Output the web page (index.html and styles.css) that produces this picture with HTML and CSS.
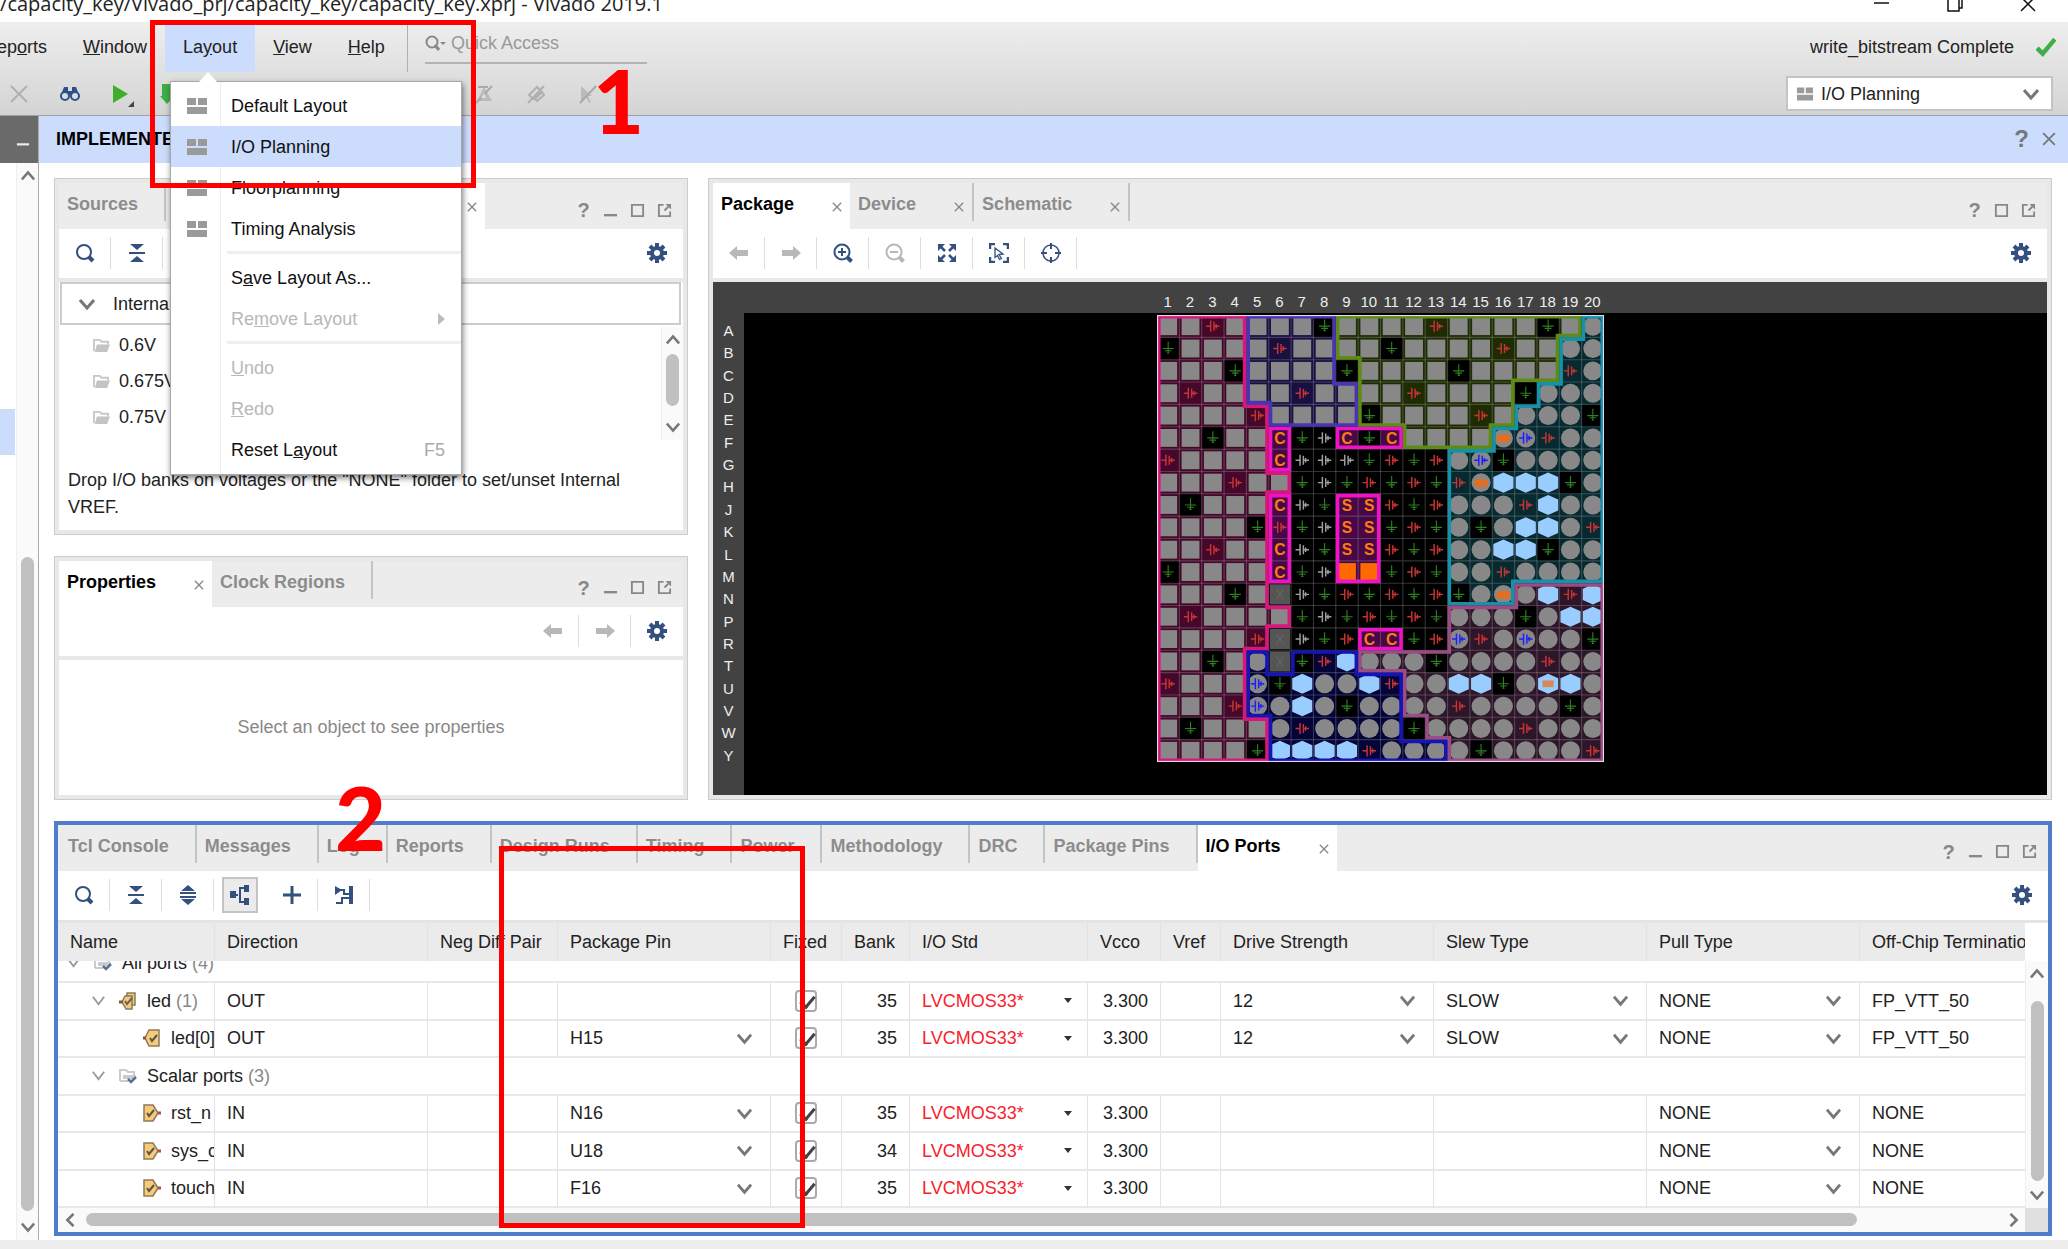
FILE: index.html
```html
<!DOCTYPE html>
<html lang="en">
<head>
    <meta charset="UTF-8">
    <meta name="viewport" content="width=device-width, initial-scale=1.0">
    <title>Vivado 2019.1</title>
    <link rel="stylesheet" href="styles.css">
</head>
<body>
    <!-- Icon sprite -->
    <svg class="sprite" aria-hidden="true">
        <symbol id="i-search" viewBox="0 0 20 20"><circle cx="9" cy="9" r="7" fill="none" stroke="currentColor" stroke-width="2"/><path d="M14 14l4 4" stroke="currentColor" stroke-width="4"/></symbol>
        <symbol id="i-collapse" viewBox="0 0 20 20"><path d="M3 1h14l-7 6zM3 19h14l-7-6zM2 9h16v2H2z" fill="currentColor"/></symbol>
        <symbol id="i-expand" viewBox="0 0 20 20"><path d="M3 6h14L10 0zM3 14h14L10 20zM2 7h16v2H2zM2 11h16v2H2z" fill="currentColor"/></symbol>
        <symbol id="i-tree" viewBox="0 0 20 20"><path d="M0 6h6v7H0zM14 0h5v7h-5zM14 13h5v7h-5z" fill="currentColor"/><path d="M6 10h2M15 3h-5v14h5" fill="none" stroke="currentColor" stroke-width="2"/></symbol>
        <symbol id="i-plus" viewBox="0 0 20 20"><path d="M10 1v18M1 10h18" stroke="currentColor" stroke-width="3"/></symbol>
        <symbol id="i-port" viewBox="0 0 20 20"><path d="M1 1l7 4-7 5zM15 1h4v18h-4z" fill="currentColor"/><path d="M6 5h4v4h5M2 18h6v-5h7" fill="none" stroke="currentColor" stroke-width="2"/></symbol>
        <symbol id="i-gear" viewBox="0 0 20 20"><path d="M10 0v20M0 10h20M3 3l14 14M17 3L3 17" stroke="currentColor" stroke-width="4"/><circle cx="10" cy="10" r="7" fill="currentColor"/><circle cx="10" cy="10" r="3" fill="#fff"/></symbol>
        <symbol id="i-left" viewBox="0 0 20 20"><path d="M0 10l8-7v4h11v6H8v4z" fill="currentColor"/></symbol>
        <symbol id="i-right" viewBox="0 0 20 20"><path d="M20 10l-8-7v4H1v6h11v4z" fill="currentColor"/></symbol>
        <symbol id="i-zoom-in" viewBox="0 0 20 20"><circle cx="9" cy="9" r="7.500" fill="none" stroke="currentColor" stroke-width="2"/><path d="M9 5v8M5 9h8" stroke="currentColor" stroke-width="2"/><path d="M14.500 14.500l4 4" stroke="currentColor" stroke-width="4"/></symbol>
        <symbol id="i-zoom-out" viewBox="0 0 20 20"><circle cx="9" cy="9" r="7.500" fill="none" stroke="currentColor" stroke-width="2"/><path d="M5 9h8" stroke="currentColor" stroke-width="2"/><path d="M14.500 14.500l4 4" stroke="currentColor" stroke-width="4"/></symbol>
        <symbol id="i-fit" viewBox="0 0 20 20"><path d="M1 1h7L1 8zM19 1v7l-7-7zM1 19v-7l7 7zM19 19h-7l7-7z" fill="currentColor"/><path d="M3 3l5 5M17 3l-5 5M3 17l5-5M17 17l-5-5" stroke="currentColor" stroke-width="2.500"/></symbol>
        <symbol id="i-select" viewBox="0 0 20 20"><path d="M6 1H1v5M14 1h5v5M1 14v5h5M19 14v5h-5" fill="none" stroke="currentColor" stroke-width="2.500"/><path d="M6 5l8 6-4 .5 2.500 4-2 1-2-4-2.500 2z" fill="none" stroke="currentColor" stroke-width="1.300"/></symbol>
        <symbol id="i-target" viewBox="0 0 20 20"><circle cx="10" cy="10" r="8" fill="none" stroke="currentColor" stroke-width="1.500"/><path d="M10 0v6M10 14v6M0 10h6M14 10h6" stroke="currentColor" stroke-width="2"/></symbol>
        <symbol id="i-min" viewBox="0 0 16 16"><path d="M1 13h14" stroke="currentColor" stroke-width="2.500"/></symbol>
        <symbol id="i-max" viewBox="0 0 16 16"><path d="M2 2h12v12H2z" fill="none" stroke="currentColor" stroke-width="2"/></symbol>
        <symbol id="i-float" viewBox="0 0 16 16"><path d="M7 2H2v12h12V9M8 8l4-4" fill="none" stroke="currentColor" stroke-width="2"/><path d="M9 1h6v6z" fill="currentColor"/></symbol>
        <symbol id="i-close" viewBox="0 0 12 12"><path d="M1 1l10 10M11 1L1 11" stroke="currentColor" stroke-width="1.600"/></symbol>
        <symbol id="i-down" viewBox="0 0 16 16"><path d="M1 4l7 8 7-8" fill="none" stroke="currentColor" stroke-width="3"/></symbol>
        <symbol id="i-twist" viewBox="0 0 16 16"><path d="M2 4l6 8 6-8" fill="none" stroke="currentColor" stroke-width="2"/></symbol>
        <symbol id="i-up" viewBox="0 0 16 16"><path d="M1 12l7-8 7 8" fill="none" stroke="currentColor" stroke-width="3"/></symbol>
        <symbol id="i-back" viewBox="0 0 16 16"><path d="M12 1L5 8l7 7" fill="none" stroke="currentColor" stroke-width="3"/></symbol>
        <symbol id="i-next" viewBox="0 0 16 16"><path d="M4 1l7 7-7 7" fill="none" stroke="currentColor" stroke-width="3"/></symbol>
        <symbol id="i-layout" viewBox="0 0 20 18"><path d="M0 1h9v7H0zM11 1h9v7h-9zM0 10h20v7H0z" fill="#9a9a9a"/></symbol>
        <symbol id="i-folder" viewBox="0 0 18 16"><path d="M1 14V2h6l2 2h7v3" fill="none" stroke="#c8c8c8" stroke-width="2"/><path d="M4 7h14l-3 8H2z" fill="#c4c4c4"/></symbol>
        <symbol id="i-folder-ok" viewBox="0 0 18 16"><path d="M1 13V2h6l2 2h6v3M1 13h8" fill="none" stroke="#c8ccd0" stroke-width="2"/><path d="M4 7h13l-2 4H4z" fill="#c8ccd0"/><path d="M9 11l3 3 5-5" fill="none" stroke="#5a7090" stroke-width="2.500"/></symbol>
        <symbol id="i-out" viewBox="0 0 18 18"><path d="M6 1h10v16H6L2 9z" fill="#f8ca74" stroke="#8a7a60" stroke-width="1.500"/><path d="M0 9h3" stroke="#8a5040" stroke-width="3"/><path d="M7 9l2 3 5-6" fill="none" stroke="#555" stroke-width="2"/></symbol>
        <symbol id="i-bus" viewBox="0 0 18 18"><path d="M8 1h8v12H8z" fill="#f8ca74" stroke="#8a7a60" stroke-width="1.500"/><path d="M6 4h7v13H7l-4-7z" fill="#f8ca74" stroke="#8a7a60" stroke-width="1.500"/><path d="M0 10h4" stroke="#8a5040" stroke-width="3"/><path d="M6 9l2 3 5-6" fill="none" stroke="#666" stroke-width="2"/></symbol>
        <symbol id="i-in" viewBox="0 0 18 18"><path d="M1 1h9l5 8-5 8H1z" fill="#f8ca74" stroke="#8a7a60" stroke-width="1.500"/><path d="M15 9h3" stroke="#b05040" stroke-width="3"/><path d="M4 9l2 3 5-6" fill="none" stroke="#555" stroke-width="2"/></symbol>
    </svg>

    <!-- Title bar -->
    <header class="titlebar">
        <span class="title-text">j/capacity_key/Vivado_prj/capacity_key/capacity_key.xprj - Vivado 2019.1</span>
        <div class="window-buttons">
            <button aria-label="Minimize"><svg viewBox="0 0 16 16"><path d="M0 7h15" stroke="#111" stroke-width="1.500"/></svg></button>
            <button aria-label="Restore"><svg viewBox="0 0 16 16"><path d="M1 4v11h11V4M12 12h3V2" fill="none" stroke="#111" stroke-width="1.500"/></svg></button>
            <button aria-label="Close"><svg viewBox="0 0 16 16"><path d="M1 1l14 14M15 1L1 15" stroke="#111" stroke-width="1.500"/></svg></button>
        </div>
    </header>

    <!-- Menu and main toolbar -->
    <div class="topbar">
        <div class="menubar">
            <nav>
                <ul class="menus">
                    <li class="cut"><a href="#">Rep<u>o</u>rts</a></li>
                    <li><a href="#"><u>W</u>indow</a></li>
                    <li class="open">
                        <a href="#">La<u>y</u>out</a>
                        <div class="popup">
                            <button><svg><use href="#i-layout"/></svg>Default Layout</button>
                            <button class="hot"><svg><use href="#i-layout"/></svg>I/O Planning</button>
                            <button><svg><use href="#i-layout"/></svg>Floorplanning</button>
                            <button><svg><use href="#i-layout"/></svg>Timing Analysis</button>
                            <hr>
                            <button>S<u>a</u>ve Layout As...</button>
                            <button disabled>Re<u>m</u>ove Layout <span class="submenu"></span></button>
                            <hr>
                            <button disabled><u>U</u>ndo</button>
                            <button disabled><u>R</u>edo</button>
                            <button>Reset L<u>a</u>yout <kbd>F5</kbd></button>
                        </div>
                    </li>
                    <li><a href="#"><u>V</u>iew</a></li>
                    <li><a href="#"><u>H</u>elp</a></li>
                </ul>
            </nav>
            <label class="quick">
                <svg viewBox="0 0 22 18"><circle cx="7" cy="8" r="5.500" fill="none" stroke="#888" stroke-width="2"/><path d="M10 11l4 5" stroke="#888" stroke-width="3"/><path d="M15 8h6l-3 3z" fill="#888"/></svg>
                <input type="text" placeholder="Quick Access" aria-label="Quick Access">
            </label>
            <div class="run-status">
                write_bitstream Complete
                <svg viewBox="0 0 18 18"><path d="M1 10l5 5L17 2" fill="none" stroke="#3fae49" stroke-width="4"/></svg>
            </div>
        </div>
        <div class="main-tools">
            <button aria-label="Delete"><svg viewBox="0 0 20 20"><path d="M2 2l16 16M18 2L2 18" stroke="#b0b0b0" stroke-width="2"/></svg></button>
            <button aria-label="Find"><svg viewBox="0 0 20 20"><path d="M4 3h4v4h4V3h4l3 8H1z" fill="#2f4f86"/><circle cx="5" cy="12" r="4" fill="#d8dce4" stroke="#2f4f86" stroke-width="2"/><circle cx="15" cy="12" r="4" fill="#d8dce4" stroke="#2f4f86" stroke-width="2"/></svg></button>
            <button class="run" aria-label="Run"><svg viewBox="0 0 24 26"><path d="M2 4l15 9-15 9z" fill="#3fae2a"/><path d="M23 20v6h-6z" fill="#444"/></svg></button>
            <button aria-label="Generate bitstream"><svg viewBox="0 0 20 20"><path d="M2 0h9v11h4l-8 9-7-8h2z" fill="#3fae49"/></svg></button>
            <div class="more-tools">
                <button disabled aria-label="Unmark"><svg viewBox="0 0 20 20"><path d="M10 3l8 14H3zM2 5h8" fill="#bbb"/><path d="M4 3h10M2 19L18 2" stroke="#aaa" stroke-width="2"/><path d="M7 14l5 0-2-5z" fill="#ddd"/></svg></button>
                <button disabled aria-label="Unhighlight"><svg viewBox="0 0 20 20"><path d="M3 11l8-8 4 4-8 8zM9 15l7-7 2 3-7 6zM2 19L18 2" fill="none" stroke="#b0b0b0" stroke-width="2"/></svg></button>
                <button disabled aria-label="Unselect"><svg viewBox="0 0 20 20"><path d="M3 2l11 10h-4l3 6-2 1-3-6-5 4z" fill="#bbb"/><path d="M2 19L18 2" stroke="#aaa" stroke-width="2"/></svg></button>
            </div>
            <label class="layout-pick">
                <svg class="pick-icon"><use href="#i-layout"/></svg>
                <select aria-label="Layout"><option>I/O Planning</option></select>
                <svg class="pick-arrow"><use href="#i-down"/></svg>
            </label>
        </div>
    </div>

    <div class="workspace">
        <!-- Left edge of the Flow Navigator -->
        <aside class="navigator">
            <div class="nav-head"><button aria-label="Minimize navigator"><svg><use href="#i-min"/></svg></button></div>
            <div class="nav-body">
                <div class="nav-item"></div>
                <div class="vscroll">
                    <svg><use href="#i-up"/></svg>
                    <div class="thumb nav-thumb"></div>
                    <svg><use href="#i-down"/></svg>
                </div>
            </div>
        </aside>

        <div class="design">
            <div class="design-head">
                <h1>IMPLEMENTED DESIGN</h1>
                <button aria-label="Help">?</button>
                <button aria-label="Close design"><svg><use href="#i-close"/></svg></button>
            </div>

            <main class="panels">
                <section class="panel sources">
                    <div class="tabs">
                        <button class="tab">Sources</button>
                        <button class="tab">Netlist</button>
                        <button class="tab active wide">Device Constraints <svg><use href="#i-close"/></svg></button>
                        <div class="panel-buttons">
                            <button aria-label="Help">?</button>
                            <button aria-label="Minimize"><svg><use href="#i-min"/></svg></button>
                            <button aria-label="Maximize"><svg><use href="#i-max"/></svg></button>
                            <button aria-label="Float"><svg><use href="#i-float"/></svg></button>
                        </div>
                    </div>
                    <div class="tools">
                        <button aria-label="Search"><svg><use href="#i-search"/></svg></button>
                        <button aria-label="Collapse all"><svg><use href="#i-collapse"/></svg></button>
                        <button class="settings" aria-label="Settings"><svg><use href="#i-gear"/></svg></button>
                    </div>
                    <div class="panel-body">
                        <button class="vref-head"><svg><use href="#i-down"/></svg>Internal VREF</button>
                        <div class="vref">
                            <ul>
                                <li><svg><use href="#i-folder"/></svg>0.6V</li>
                                <li><svg><use href="#i-folder"/></svg>0.675V</li>
                                <li><svg><use href="#i-folder"/></svg>0.75V</li>
                            </ul>
                            <div class="vscroll">
                                <svg><use href="#i-up"/></svg>
                                <div class="thumb vref-thumb"></div>
                                <svg><use href="#i-down"/></svg>
                            </div>
                        </div>
                        <p class="hint">Drop I/O banks on voltages or the "NONE" folder to set/unset Internal VREF.</p>
                    </div>
                </section>

                <section class="panel properties">
                    <div class="tabs">
                        <button class="tab active">Properties <svg><use href="#i-close"/></svg></button>
                        <button class="tab">Clock Regions</button>
                        <div class="panel-buttons">
                            <button aria-label="Help">?</button>
                            <button aria-label="Minimize"><svg><use href="#i-min"/></svg></button>
                            <button aria-label="Maximize"><svg><use href="#i-max"/></svg></button>
                            <button aria-label="Float"><svg><use href="#i-float"/></svg></button>
                        </div>
                    </div>
                    <div class="tools end">
                        <button disabled aria-label="Back"><svg><use href="#i-left"/></svg></button>
                        <button disabled aria-label="Forward"><svg><use href="#i-right"/></svg></button>
                        <button class="settings" aria-label="Settings"><svg><use href="#i-gear"/></svg></button>
                    </div>
                    <div class="panel-body empty">Select an object to see properties</div>
                </section>

                <section class="panel package">
                    <div class="tabs">
                        <button class="tab active">Package <svg><use href="#i-close"/></svg></button>
                        <button class="tab">Device <svg><use href="#i-close"/></svg></button>
                        <button class="tab">Schematic <svg><use href="#i-close"/></svg></button>
                        <div class="panel-buttons">
                            <button aria-label="Help">?</button>
                            <button aria-label="Maximize"><svg><use href="#i-max"/></svg></button>
                            <button aria-label="Float"><svg><use href="#i-float"/></svg></button>
                        </div>
                    </div>
                    <div class="tools">
                        <button disabled aria-label="Back"><svg><use href="#i-left"/></svg></button>
                        <button disabled aria-label="Forward"><svg><use href="#i-right"/></svg></button>
                        <button aria-label="Zoom in"><svg><use href="#i-zoom-in"/></svg></button>
                        <button disabled aria-label="Zoom out"><svg><use href="#i-zoom-out"/></svg></button>
                        <button aria-label="Zoom fit"><svg><use href="#i-fit"/></svg></button>
                        <button aria-label="Select area"><svg><use href="#i-select"/></svg></button>
                        <button aria-label="Autofit selection"><svg><use href="#i-target"/></svg></button>
                        <button class="settings" aria-label="Settings"><svg><use href="#i-gear"/></svg></button>
                    </div>
                    <div class="canvas">
                        <div class="ruler-top"><div class="cols" id="cols"></div></div>
                        <div class="ruler-left"><div class="rows" id="rows"></div></div>
                        <div class="chip-area"><svg id="chip" class="chip" viewBox="0 0 400 400"></svg></div>
                    </div>
                </section>

                <section class="panel ports focused">
                    <div class="tabs">
                        <button class="tab">Tcl Console</button>
                        <button class="tab">Messages</button>
                        <button class="tab">Log</button>
                        <button class="tab">Reports</button>
                        <button class="tab">Design Runs</button>
                        <button class="tab">Timing</button>
                        <button class="tab">Power</button>
                        <button class="tab">Methodology</button>
                        <button class="tab">DRC</button>
                        <button class="tab">Package Pins</button>
                        <button class="tab active">I/O Ports <svg><use href="#i-close"/></svg></button>
                        <div class="panel-buttons">
                            <button aria-label="Help">?</button>
                            <button aria-label="Minimize"><svg><use href="#i-min"/></svg></button>
                            <button aria-label="Maximize"><svg><use href="#i-max"/></svg></button>
                            <button aria-label="Float"><svg><use href="#i-float"/></svg></button>
                        </div>
                    </div>
                    <div class="tools">
                        <button aria-label="Search"><svg><use href="#i-search"/></svg></button>
                        <button aria-label="Collapse all"><svg><use href="#i-collapse"/></svg></button>
                        <button aria-label="Expand all"><svg><use href="#i-expand"/></svg></button>
                        <button class="pressed" aria-label="Group by interface"><svg><use href="#i-tree"/></svg></button>
                        <button aria-label="Create port"><svg><use href="#i-plus"/></svg></button>
                        <button aria-label="Place ports"><svg><use href="#i-port"/></svg></button>
                        <button class="settings" aria-label="Settings"><svg><use href="#i-gear"/></svg></button>
                    </div>
                    <div class="table-area">
                        <table>
                            <colgroup>
                                <col class="w-name"><col class="w-list"><col class="w-pair"><col class="w-list">
                                <col class="w-fixed"><col class="w-bank"><col class="w-std"><col class="w-vcco">
                                <col class="w-vref"><col class="w-list"><col class="w-list"><col class="w-list"><col>
                            </colgroup>
                            <thead>
                                <tr>
                                    <th>Name</th><th>Direction</th><th>Neg Diff Pair</th><th>Package Pin</th>
                                    <th>Fixed</th><th>Bank</th><th>I/O Std</th><th>Vcco</th><th>Vref</th>
                                    <th>Drive Strength</th><th>Slew Type</th><th>Pull Type</th><th>Off-Chip Termination</th>
                                </tr>
                            </thead>
                            <tbody id="ports"></tbody>
                        </table>
                        <div class="vscroll table-scroll">
                            <svg><use href="#i-up"/></svg>
                            <div class="thumb table-thumb"></div>
                            <svg><use href="#i-down"/></svg>
                        </div>
                    </div>
                    <div class="hscroll">
                        <svg><use href="#i-back"/></svg>
                        <div class="htrack"><div class="hthumb"></div></div>
                        <svg><use href="#i-next"/></svg>
                        <div class="corner"></div>
                    </div>
                </section>
            </main>
        </div>
    </div>
    <footer class="statusbar"></footer>

    <!-- Step marks -->
    <div class="mark mark-one"></div>
    <div class="mark mark-two"></div>
    <div class="step step-one">1</div>
    <div class="step step-two">2</div>

    <script>
        // I/O ports table
        const ports = [
            { group: 'All ports', count: 4, level: 0 },
            { name: 'led', count: 1, level: 1, icon: 'bus', dir: 'OUT', bank: 35, drive: '12', slew: 'SLOW', term: 'FP_VTT_50' },
            { name: 'led[0]', level: 2, icon: 'out', dir: 'OUT', pin: 'H15', bank: 35, drive: '12', slew: 'SLOW', term: 'FP_VTT_50' },
            { group: 'Scalar ports', count: 3, level: 1 },
            { name: 'rst_n', level: 2, icon: 'in', dir: 'IN', pin: 'N16', bank: 35, term: 'NONE' },
            { name: 'sys_clk', level: 2, icon: 'in', dir: 'IN', pin: 'U18', bank: 34, term: 'NONE' },
            { name: 'touch_key', level: 2, icon: 'in', dir: 'IN', pin: 'F16', bank: 35, term: 'NONE' }
        ];

        function icon(name) {
            return `<svg><use href="#i-${name}"/></svg>`;
        }

        function pick(value, label) {
            if (!value) return '';
            return `<div class="pick"><select aria-label="${label}"><option>${value}</option></select>${icon('down')}</div>`;
        }

        function nameCell(port) {
            const arrow = port.count ? icon('twist') : '';
            const count = port.count ? ` <span class="count">(${port.count})</span>` : '';
            return `<div class="node level-${port.level}"><span class="twist">${arrow}</span>${icon(port.icon || 'folder-ok')}<span>${port.name || port.group}${count}</span></div>`;
        }

        document.getElementById('ports').innerHTML = ports.map(port => {
            if (port.group) {
                return `<tr class="group"><td colspan="13">${nameCell(port)}</td></tr>`;
            }
            return `<tr>
                <td>${nameCell(port)}</td>
                <td>${port.dir}</td>
                <td></td>
                <td>${pick(port.pin, 'Package pin')}</td>
                <td class="center"><input type="checkbox" checked aria-label="Fixed ${port.name}"></td>
                <td class="right">${port.bank}</td>
                <td><div class="pick std"><select aria-label="I/O standard"><option>LVCMOS33*</option></select><i></i></div></td>
                <td class="right">3.300</td>
                <td></td>
                <td>${pick(port.drive, 'Drive strength')}</td>
                <td>${pick(port.slew, 'Slew type')}</td>
                <td>${pick('NONE', 'Pull type')}</td>
                <td>${port.term}</td>
            </tr>`;
        }).join('');

        // Package pins, one letter for each ball
        const balls = {
            A: 'sspssssgsssspssssgsc',
            B: 'gsssspssssgsssspsscc',
            C: 'sssgssssgssssgsssspc',
            D: 'spsssspsssspssssgccc',
            E: 'sssspssssgsssspscccg',
            F: 'ssgssCgwCgCssssObpcc',
            G: 'pssssCwwwgpgpcbgcccc',
            H: 'ssspssgwgpgpgpOhhhgc',
            J: 'sgsssCwgSSpgpcccphcc',
            K: 'ssssgpgwSSgpgcgchhcp',
            L: 'sspssCwgSSpgpcchhgcc',
            M: 'gssssCgwoogpgccpcccc',
            N: 'sssgsxwgpgpgpgcOchph',
            P: 'spssssgwgpgpgcccgchh',
            R: 'sssspxwgpCCgpbpcbccg',
            T: 'ssgscxgphcccgccccpcc',
            U: 'psssbghcchpcchhgcHhc',
            V: 'ssspbchcgccccpccccgc',
            W: 'sgssscpccccgccccpccc',
            Y: 'ssssghhhhpccccgccccp'
        };

        // Bank outlines in ball units
        const banks = [
            ['#d6187c', '#46082a', 'M0 0H4V4H5V7H6V8H5V13H6V14H5V15H4V18H5V20H0Z'],
            ['#4a34b4', '#181040', 'M4 0H8V3H9V5H5V4H4Z'],
            ['#5c8c16', '#1e2c04', 'M8 0H19V1H18V3H16V5H15V6H11V5H9V2H8Z'],
            ['#1592aa', '#062a30', 'M19 0H20V12H16V13H13V6H15V5H16V4H17V3H18V1H19Z'],
            ['#9a4c84', '#2e162a', 'M20 12H16V13H13V15H9V16H11V18H12V19H13V20H20Z'],
            ['#1414b8', '#040438', 'M4 15H5V16H6V15H9V16H11V19H13V20H5V18H4Z'],
            ['#f012c4', '#480848', 'M5 5H6V7H5ZM8 5H11V6H8ZM5 8H6V12H5ZM8 8H10V12H8ZM9 14H11V15H9Z']
        ];

        const ground = '<rect width="20" height="20" fill="#000"/><path d="M10 4v10M5 10h10M7 12h6M9 14h2" stroke="#2f8020" fill="none"/>';
        const power = color => `<path d="M4 10h4M11 10h5M8 5v10M11 6v8M13 8v4" stroke="${color}" stroke-width="1.300" fill="none"/>`;
        const circle = '<circle cx="10" cy="10" r="8.500" fill="#888"/>';
        const hexagon = '<path d="M10 1l9 4v10l-9 4-9-4V5z" fill="#99ccff"/>';
        const letter = text => `<text x="10" y="15">${text}</text>`;
        const shapes = {
            s: '<rect x="2" y="2" width="16" height="16" fill="#888"/>',
            x: '<rect x="1" y="1" width="18" height="18" fill="#555"/><path d="M7 6l6 8M13 6l-6 8" stroke="#666"/>',
            c: circle,
            h: hexagon,
            g: ground,
            p: power('#c83434'),
            w: power('#a0a0a0'),
            b: circle + power('#1c1cff'),
            C: letter('C'),
            S: letter('S'),
            o: '<rect x="2" y="2" width="16" height="16" fill="#ff6a00"/>',
            O: circle + '<rect x="4" y="7" width="12" height="7" rx="2" fill="#e07024"/>',
            H: hexagon + '<rect x="5" y="7" width="10" height="6" fill="#d88858"/>'
        };

        let drawing = '<rect width="400" height="400" fill="#000"/><defs>';
        banks.forEach((bank, i) => {
            drawing += `<clipPath id="bank-${i}"><path d="${bank[2]}"/></clipPath>`;
        });
        drawing += '</defs><g transform="scale(20)">';
        banks.forEach(bank => {
            drawing += `<path d="${bank[2]}" fill="${bank[1]}"/>`;
        });
        drawing += '</g>';
        Object.values(balls).forEach((row, y) => {
            row.split('').forEach((ball, x) => {
                drawing += `<g transform="translate(${x * 20} ${y * 20})">${shapes[ball]}</g>`;
            });
        });
        for (let i = 1; i < 20; i++) {
            drawing += `<path d="M${i * 20} 0V400M0 ${i * 20}H400" stroke="#aaa" stroke-opacity=".3"/>`;
        }
        drawing += '<g transform="scale(20)">';
        banks.forEach((bank, i) => {
            drawing += `<path d="${bank[2]}" fill="none" stroke="${bank[0]}" stroke-width=".32" clip-path="url(#bank-${i})"/>`;
        });
        drawing += '</g><rect width="400" height="400" fill="none" stroke="#e8d8e8" stroke-width="2"/>';
        document.getElementById('chip').innerHTML = drawing;

        document.getElementById('rows').innerHTML = Object.keys(balls).map(name => `<span>${name}</span>`).join('');
        document.getElementById('cols').innerHTML = Object.keys(balls).map((name, i) => `<span>${i + 1}</span>`).join('');
    </script>
</body>
</html>
```
FILE: styles.css
```css
/* General */
* {
    box-sizing: border-box;
}
body {
    font-family: "Liberation Sans", Arial, sans-serif;
    font-size: 18px;
    line-height: 24px;
    color: #222;
    background-color: #fff;
    margin: 0;
    display: flex;
    flex-direction: column;
    height: 100vh;
    overflow: hidden;
    position: relative;
}
button, input, select {
    font: inherit;
    color: inherit;
    background: none;
    border: none;
    margin: 0;
    padding: 0;
}
select {
    appearance: none;
}
ul {
    list-style: none;
    margin: 0;
    padding: 0;
}
svg {
    display: block;
    flex: none;
    width: 20px;
    height: 20px;
}
.sprite {
    position: absolute;
    width: 0;
    height: 0;
}

/* Title bar */
.titlebar {
    flex: none;
    height: 22px;
    padding: 0 32px 6px 0;
    overflow: hidden;
    display: flex;
    align-items: flex-end;
    justify-content: space-between;
}
.title-text {
    font-family: "Open Sans", "Noto Sans", sans-serif;
    font-size: 20px;
    white-space: nowrap;
    margin-left: -5px;
}
.window-buttons {
    display: flex;
    gap: 57px;
    padding-bottom: 4px;
}
.window-buttons svg {
    width: 16px;
    height: 16px;
}

/* Menu bar */
.topbar {
    flex: none;
    background: linear-gradient(#eee, #d4d4d4);
    border-bottom: 1px solid #a0a0a0;
}
.menubar {
    display: flex;
    height: 50px;
    padding: 2px 12px 0 0;
}
.menus {
    display: flex;
    height: 48px;
    border-right: 1px solid #b0b0b0;
    padding-right: 4px;
}
.menus li {
    position: relative;
}
.menus a {
    display: block;
    color: #222;
    text-decoration: none;
    padding: 0 18px;
    line-height: 46px;
}
.menus .cut {
    margin-left: -34px;
}
.open > a {
    background-color: #cbdcfd;
    height: 48px;
}
.quick {
    display: flex;
    align-items: center;
    width: 222px;
    height: 40px;
    margin-left: 17px;
    border-bottom: 2px solid #b4b4b4;
}
.quick svg {
    width: 22px;
    height: 18px;
}
.quick input {
    width: 180px;
    padding: 0 4px;
}
.quick input::placeholder {
    color: #999;
    opacity: 1;
}
.run-status {
    margin-left: auto;
    display: flex;
    align-items: center;
    gap: 22px;
    height: 46px;
}

/* Layout menu */
.popup {
    position: absolute;
    z-index: 5;
    left: 5px;
    top: 57px;
    width: 292px;
    padding: 3px 0 4px;
    background: linear-gradient(#eee, #eee) 49px 0 / 1px 100% no-repeat #fff;
    border: 1px solid #a8a8a8;
    box-shadow: 1px 3px 6px rgba(0, 0, 0, 0.5);
}
.popup::before {
    content: "";
    position: absolute;
    left: 28px;
    top: -10px;
    border: 9px solid transparent;
    border-top: 0;
    border-bottom: 10px solid #fff;
}
.popup button {
    position: relative;
    display: flex;
    align-items: center;
    width: 100%;
    height: 41px;
    padding: 0 16px 0 60px;
    white-space: pre;
    color: #111;
}
.popup button svg {
    position: absolute;
    left: 16px;
    height: 18px;
}
.popup .hot {
    background-color: #cbdcfd;
}
.popup button:disabled {
    color: #b8b8b8;
}
.popup hr {
    height: 3px;
    margin: 2px 0 3px 56px;
    border: none;
    background-color: #eee;
}
.popup kbd {
    font: inherit;
    color: #aaa;
    margin-left: auto;
}
.submenu {
    margin-left: auto;
    border: 6px solid transparent;
    border-left: 7px solid #bbb;
    border-right: 0;
}

/* Main toolbar */
.main-tools {
    display: flex;
    align-items: center;
    height: 43px;
    padding: 0 15px 0 9px;
    gap: 31px;
}
.main-tools .run {
    margin-right: -6px;
}
.run svg {
    width: 24px;
    height: 26px;
}
.more-tools {
    display: flex;
    gap: 32px;
    margin-left: 263px;
}
.layout-pick {
    margin-left: auto;
    display: flex;
    align-items: center;
    width: 267px;
    height: 35px;
    padding: 0 12px 0 9px;
    gap: 8px;
    background-color: #fff;
    border: 2px solid #c4c4c4;
}
.layout-pick select {
    flex: 1;
}
.pick-icon, .pick-arrow {
    width: 16px;
    height: 16px;
    color: #777;
}

/* Workspace */
.workspace {
    flex: 1;
    display: flex;
    min-height: 0;
}
.navigator {
    width: 38px;
    display: flex;
    flex-direction: column;
}
.nav-head {
    display: flex;
    align-items: center;
    justify-content: flex-end;
    height: 47px;
    padding-right: 8px;
    background-color: #6a6a6a;
    color: #eee;
}
.nav-head svg {
    width: 14px;
    height: 14px;
}
.nav-body {
    flex: 1;
    display: flex;
    justify-content: space-between;
}
.nav-item {
    width: 15px;
    height: 46px;
    margin-top: 246px;
    background-color: #cbdcfd;
}
.design {
    flex: 1;
    min-width: 0;
    display: flex;
    flex-direction: column;
    border-left: 1px solid #aaa;
}
.design-head {
    flex: none;
    height: 47px;
    padding: 0 12px 2px 17px;
    display: flex;
    align-items: center;
    background-color: #cbdcfd;
}
.design-head h1 {
    flex: 1;
    margin: 0;
    font-size: 18px;
    color: #000;
}
.design-head button {
    color: #777;
    font-size: 24px;
    font-weight: bold;
    margin-left: 13px;
}
.design-head svg {
    width: 14px;
    height: 14px;
}

/* Scrollbars */
.vscroll {
    width: 22px;
    padding: 6px 0;
    display: flex;
    flex-direction: column;
    align-items: center;
    color: #777;
    background-color: #fafafa;
    border-left: 1px solid #eee;
}
.vscroll svg, .hscroll svg {
    width: 14px;
    height: 14px;
}
.vscroll svg:last-child {
    margin-top: auto;
}
.thumb {
    width: 13px;
    border-radius: 7px;
    background-color: #c0c0c0;
}
.nav-thumb {
    flex: 1;
    margin: 374px 0 9px;
}
.vref-thumb {
    height: 52px;
    margin-top: 7px;
}
.table-thumb {
    height: 180px;
    margin-top: 20px;
}

/* Panels */
.panels {
    flex: 1;
    min-height: 0;
    display: grid;
    grid-template-columns: minmax(0, 634fr) minmax(0, 1344fr);
    grid-template-rows: minmax(0, 356fr) minmax(0, 244fr) auto;
    gap: 21px 20px;
    padding: 15px 16px 4px 15px;
}
.panel {
    display: flex;
    flex-direction: column;
    min-width: 0;
    padding: 4px;
    background-color: #e8e8e8;
    border: 1px solid #ccc;
}
.package {
    grid-column: 2;
    grid-row: 1 / 3;
}
.ports {
    grid-column: 1 / 3;
}
.focused {
    padding: 0;
    border: 4px solid #4f7dcb;
}
.tabs {
    flex: none;
    height: 46px;
    display: flex;
    align-items: flex-start;
    background-color: #ececec;
}
.ports .tabs {
    padding-left: 2px;
}
.tab {
    display: flex;
    align-items: center;
    justify-content: space-between;
    height: 38px;
    padding: 4px 26px 0 8px;
    font-weight: bold;
    color: #8c8c8c;
    border-right: 2px solid #c4c4c4;
    white-space: pre;
}
.tab.active {
    height: 46px;
    padding-top: 0;
    padding-bottom: 4px;
    background-color: #fff;
    border-right: none;
    color: #000;
}
.tab svg {
    width: 10px;
    height: 10px;
    margin: 6px -18px 0 33px;
    color: #888;
}
.wide {
    flex: 0 1 228px;
}
.panel-buttons {
    margin-left: auto;
    display: flex;
    align-items: center;
    gap: 12px;
    height: 46px;
    padding: 8px 11px 0 0;
    color: #888;
}
.panel-buttons button {
    width: 15px;
    font-size: 20px;
    font-weight: bold;
}
.panel-buttons svg {
    width: 15px;
    height: 15px;
}
.tools {
    flex: none;
    display: flex;
    height: 49px;
    background-color: #fff;
    color: #34507f;
}
.tools button {
    display: flex;
    align-items: center;
    justify-content: center;
    width: 52px;
    height: 32px;
    margin: 8px 0 9px;
    border-right: 1px solid #ddd;
}
.tools button:disabled {
    color: #b8b8b8;
}
.tools .settings {
    margin-left: auto;
    border: none;
}
.tools.end {
    justify-content: flex-end;
}
.tools.end .settings {
    margin-left: 0;
}
.tools .pressed {
    width: 36px;
    height: 36px;
    margin: 6px 8px;
    background-color: #ebebeb;
    border: 2px solid #c4c4c4;
}
.panel-body {
    flex: 1;
    margin-top: 4px;
    background-color: #fff;
}
.empty {
    display: flex;
    align-items: center;
    justify-content: center;
    color: #888;
}

/* Internal VREF list */
.vref-head {
    display: flex;
    align-items: center;
    gap: 18px;
    width: calc(100% - 3px);
    height: 43px;
    margin-left: 1px;
    padding: 0 17px;
    border: 2px solid #ccc;
}
.vref-head svg {
    width: 16px;
    height: 16px;
    color: #777;
}
.vref {
    display: flex;
    justify-content: space-between;
    height: 115px;
    padding-top: 2px;
}
.vref li {
    display: flex;
    align-items: center;
    gap: 9px;
    height: 36px;
    padding-left: 34px;
}
.vref li svg {
    width: 17px;
    height: 15px;
}
.hint {
    margin: 27px 40px 0 9px;
    line-height: 27px;
}

/* Package view */
.canvas {
    flex: 1;
    margin-top: 4px;
    display: grid;
    grid-template-columns: 31px 1fr 31px;
    grid-template-rows: 31px 1fr;
    background-color: #000;
    color: #eee;
    font-size: 15px;
    line-height: 22px;
}
.ruler-top {
    grid-column: 1 / 4;
    display: flex;
    justify-content: center;
    align-items: flex-end;
    background-color: #424242;
}
.ruler-left {
    background-color: #424242;
}
.cols {
    display: grid;
    grid-template-columns: repeat(20, 1fr);
    width: 447px;
    text-align: center;
}
.rows {
    display: grid;
    grid-template-rows: repeat(20, 1fr);
    height: 447px;
    margin-top: 7px;
    text-align: center;
}
.chip-area {
    display: flex;
    justify-content: center;
    padding-top: 2px;
}
.chip {
    width: 447px;
    height: 447px;
}
.chip text {
    font-size: 14px;
    font-weight: bold;
    fill: #ff7a10;
    text-anchor: middle;
}

/* I/O ports table */
.table-area {
    display: flex;
    background-color: #fff;
    border-top: 3px solid #e4e4e4;
}
table {
    flex: 1;
    width: 0;
    table-layout: fixed;
    border-collapse: separate;
    border-spacing: 0;
}
.w-name { width: 157px; }
.w-list { width: 213px; }
.w-pair { width: 130px; }
.w-fixed { width: 71px; }
.w-bank { width: 68px; }
.w-std { width: 178px; }
.w-vcco { width: 73px; }
.w-vref { width: 60px; }
th, td {
    padding: 0 0 0 12px;
    overflow: hidden;
    white-space: nowrap;
    text-align: left;
    border-right: 1px solid #e2e2e2;
}
th {
    height: 38px;
    font-weight: normal;
    background-color: #ebebeb;
}
th:last-child, td:last-child {
    border-right: none;
}
td {
    height: 37px;
    border-bottom: 2px solid #e8e8e8;
}
tbody tr:nth-child(even) td {
    height: 38px;
}
td:first-child {
    padding-left: 0;
}
/* the list is scrolled, only the lower part of its first row shows */
tbody tr:first-child td {
    height: 22px;
}
tbody tr:first-child .node {
    height: 36px;
    margin-top: -16px;
    clip-path: inset(16px 0 0);
}
td.right {
    padding: 0 12px 0 0;
    text-align: right;
}
td.center {
    padding: 0;
    text-align: center;
}
.node {
    display: flex;
    align-items: center;
    overflow: hidden;
}
.node svg {
    width: 18px;
    height: 18px;
    margin-right: 10px;
}
.node .twist {
    flex: none;
    width: 28px;
}
.twist svg {
    width: 15px;
    height: 15px;
    margin: 0;
    color: #999;
}
.level-0 { padding-left: 8px; }
.level-1 { padding-left: 33px; }
.level-2 { padding-left: 57px; }
.count {
    color: #888;
}
.pick {
    display: flex;
    align-items: center;
    padding-right: 18px;
}
.pick select {
    flex: 1;
    min-width: 0;
}
.pick svg {
    width: 15px;
    height: 15px;
    color: #777;
}
.std {
    color: #f8222c;
    padding-right: 15px;
}
.std i {
    border: 4px solid transparent;
    border-top: 5px solid #333;
    border-bottom: 0;
}
td input {
    appearance: none;
    position: relative;
    display: block;
    width: 22px;
    height: 22px;
    margin: 0 auto;
    border: 2px solid #aaa;
    border-radius: 4px;
}
td input:checked::after {
    content: "";
    position: absolute;
    left: 6px;
    top: 1px;
    width: 6px;
    height: 12px;
    border: solid #444;
    border-width: 0 3px 3px 0;
    transform: rotate(40deg);
}
.table-scroll {
    margin-top: 38px;
    width: 23px;
}
.hscroll {
    display: flex;
    align-items: center;
    height: 24px;
    padding-left: 5px;
    color: #777;
    background-color: #fafafa;
}
.htrack {
    flex: 1;
    padding: 0 66px 0 9px;
    margin-right: 84px;
}
.hthumb {
    height: 13px;
    border-radius: 7px;
    background-color: #c0c0c0;
}
.corner {
    width: 23px;
    height: 24px;
    margin-left: 4px;
    background-color: #e0e0e0;
}
.statusbar {
    flex: none;
    height: 9px;
    background-color: #ededed;
}

/* Step marks over the window */
.mark {
    position: absolute;
    z-index: 10;
    border: 5px solid #f00;
    pointer-events: none;
}
.mark-one {
    left: 150px;
    top: 20px;
    width: 326px;
    height: 168px;
}
.mark-two {
    left: 499px;
    top: 846px;
    width: 306px;
    height: 382px;
}
.step {
    position: absolute;
    z-index: 10;
    font-family: Lato, sans-serif;
    font-size: 88px;
    font-weight: 900;
    line-height: 88px;
    color: #f00;
}
.step-one {
    left: 593px;
    top: 56px;
}
.step-two {
    left: 335px;
    top: 773px;
}
```
